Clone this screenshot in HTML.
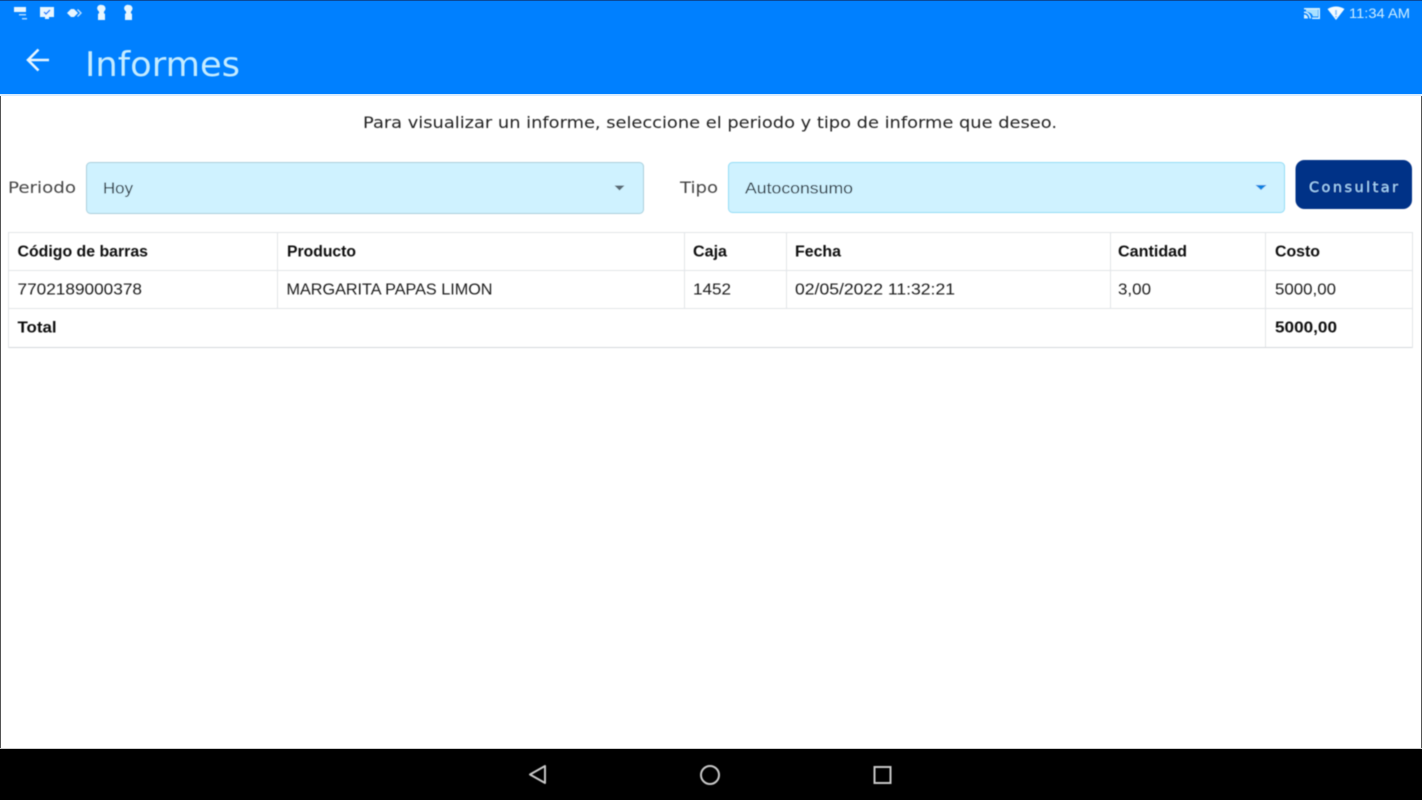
<!DOCTYPE html>
<html lang="es">
<head>
<meta charset="utf-8">
<title>Informes</title>
<style>
html,body{margin:0;padding:0;width:1422px;height:800px;overflow:hidden;background:#fff}
svg{display:block;position:absolute;left:0;top:0}
text{font-family:"Liberation Sans",sans-serif}
.c{font-family:"DejaVu Sans",sans-serif}
</style>
</head>
<body>
<svg width="1422" height="800" viewBox="0 0 1422 800" xmlns="http://www.w3.org/2000/svg">
<defs><filter id="b" x="-5%" y="-5%" width="110%" height="110%"><feGaussianBlur stdDeviation="0.45"/></filter></defs>
<rect width="1422" height="800" fill="#fff"/>
<rect x="0" y="0" width="1" height="800" fill="#555"/>
<rect x="1421" y="0" width="1" height="800" fill="#555"/>
<rect x="0" y="0" width="1422" height="94" fill="#0080ff"/>
<rect x="0" y="0" width="1422" height="1" fill="#0a4a9a"/>
<rect x="0" y="94" width="1422" height="2" fill="#d8ecff"/>
<rect x="0" y="749" width="1422" height="51" fill="#000"/>
<rect x="0" y="748" width="1422" height="1" fill="#ccc"/>

<g filter="url(#b)">
<!-- status icons left -->
<g fill="#e8f6ff">
<path d="M14 7h12v5H14z"/><path d="M19 14h7v1.500h-7zM22 18h5v1.500h-5z" opacity=".75"/>
<path d="M40 7h14v10h-5v2h-4v-2h-5z"/>
<path d="M67 13l4-4h3l4 4-4 4h-3z"/><path d="M78 9l4 4-4 4-1-1 3-3-3-3z" opacity=".8"/>
<path d="M102 5a3.500 3.500 0 0 1 2.200 6.200l-.4 1.800 1.200 1v6h-7v-6l1.200-1-.4-1.800A3.500 3.500 0 0 1 102 5z"/>
<path d="M129 5a3.500 3.500 0 0 1 2.200 6.200l-.4 1.800 1.200 1v6h-7v-6l1.200-1-.4-1.800A3.500 3.500 0 0 1 129 5z"/>
</g>
<path d="M44 12l2 2 4-4" fill="none" stroke="#0080ff" stroke-width="1.500"/>
<!-- status icons right -->
<path d="M1304 8h16v11h-8v-1.500h6.500V9.500H1304z" fill="#d8f2ff"/>
<path d="M1304 11.500a7 7 0 0 1 7 7h-1.500a5.500 5.500 0 0 0-5.500-5.500zM1304 14.500a4 4 0 0 1 4 4h-4z" fill="#d8f2ff"/>
<path d="M1306 9.500h12v7h-5q-1-4-7-5z" fill="#a8e0ff"/>
<path d="M1327.500 9q8.500-5 17 0l-8.500 11z" fill="#f4fbff"/>
<rect x="1335" y="10" width="2" height="5" fill="#8fc8ff"/>
<rect x="1335" y="16" width="2" height="1.500" fill="#8fc8ff"/>
<text x="1349" y="18" font-size="13.500" fill="#cfeeff" textLength="61" lengthAdjust="spacingAndGlyphs">11:34 AM</text>
<!-- back arrow -->
<path d="M49 60H29M38.500 49.500L28 60l10.500 10.500" fill="none" stroke="#e8f6ff" stroke-width="2.600"/>
<text x="85" y="76" font-size="34" fill="#c4ebff" class="c" textLength="155" lengthAdjust="spacingAndGlyphs">Informes</text>
<text x="363" y="128" font-size="16" fill="#222" class="c" textLength="694" lengthAdjust="spacingAndGlyphs">Para visualizar un informe, seleccione el periodo y tipo de informe que deseo.</text>
<text x="8" y="193" font-size="16" fill="#444" class="c" textLength="68" lengthAdjust="spacingAndGlyphs">Periodo</text>
<text x="680" y="193" font-size="16" fill="#444" class="c" textLength="38" lengthAdjust="spacingAndGlyphs">Tipo</text>
<!-- selects -->
<rect x="86.500" y="162.500" width="557" height="51" rx="4" fill="#cff2ff" stroke="#a9cfdc"/>
<rect x="728.500" y="162.500" width="556" height="50" rx="4" fill="#cff2ff" stroke="#8fdcf5"/>
<text x="103" y="193.500" font-size="16" fill="#2c3a44" textLength="30" lengthAdjust="spacingAndGlyphs">Hoy</text>
<text x="745" y="193.500" font-size="16" fill="#24323c" textLength="108" lengthAdjust="spacingAndGlyphs">Autoconsumo</text>
<path d="M614.500 185.500h10l-5 5z" fill="#5a6a75"/>
<path d="M1255.500 185h11l-5.500 5z" fill="#0a84e0"/>
<!-- button -->
<rect x="1295.500" y="160" width="116.500" height="49" rx="9" fill="#003087"/>
<text x="1309" y="192" font-size="14.500" fill="#a8dcff" class="c" textLength="89">Consultar</text>
<!-- table -->
<g fill="none" stroke="#e2e5e8" stroke-width="1">
<rect x="8.500" y="232.500" width="1404" height="115"/>
<path d="M9 270.500h1403M9 308.500h1403"/>
<path d="M277.500 233v75M684.500 233v75M786.500 233v75M1110.500 233v75M1265.500 233v114"/>
</g>
<path d="M9 347.500h1403" stroke="#d5d8db"/>
<g font-size="16" font-weight="700" fill="#111">
<text x="17.500" y="256.500" textLength="130.500" lengthAdjust="spacingAndGlyphs">Código de barras</text>
<text x="287" y="256.500" textLength="69" lengthAdjust="spacingAndGlyphs">Producto</text>
<text x="693" y="256.500" textLength="34" lengthAdjust="spacingAndGlyphs">Caja</text>
<text x="795" y="256.500" textLength="46" lengthAdjust="spacingAndGlyphs">Fecha</text>
<text x="1118" y="256.500" textLength="69" lengthAdjust="spacingAndGlyphs">Cantidad</text>
<text x="1275" y="256.500" textLength="45" lengthAdjust="spacingAndGlyphs">Costo</text>
<text x="17.500" y="332.500" textLength="39" lengthAdjust="spacingAndGlyphs">Total</text>
<text x="1275" y="332.500" textLength="62" lengthAdjust="spacingAndGlyphs">5000,00</text>
</g>
<g font-size="16" fill="#1f1f1f">
<text x="17.500" y="294.500" textLength="124.500" lengthAdjust="spacingAndGlyphs">7702189000378</text>
<text x="286.500" y="294.500" textLength="206" lengthAdjust="spacingAndGlyphs">MARGARITA PAPAS LIMON</text>
<text x="693" y="294.500" textLength="38" lengthAdjust="spacingAndGlyphs">1452</text>
<text x="795" y="294.500" textLength="160" lengthAdjust="spacingAndGlyphs">02/05/2022 11:32:21</text>
<text x="1118" y="294.500" textLength="33" lengthAdjust="spacingAndGlyphs">3,00</text>
<text x="1275" y="294.500" textLength="61" lengthAdjust="spacingAndGlyphs">5000,00</text>
</g>
<!-- nav bar -->
<g fill="none" stroke="#c8c8c8" stroke-width="2">
<path d="M545 766v17l-15-8.500z" stroke-linejoin="round"/>
<circle cx="710" cy="775" r="9"/>
<rect x="874.500" y="767" width="16" height="16"/>
</g>
</g>
</svg>
</body>
</html>
